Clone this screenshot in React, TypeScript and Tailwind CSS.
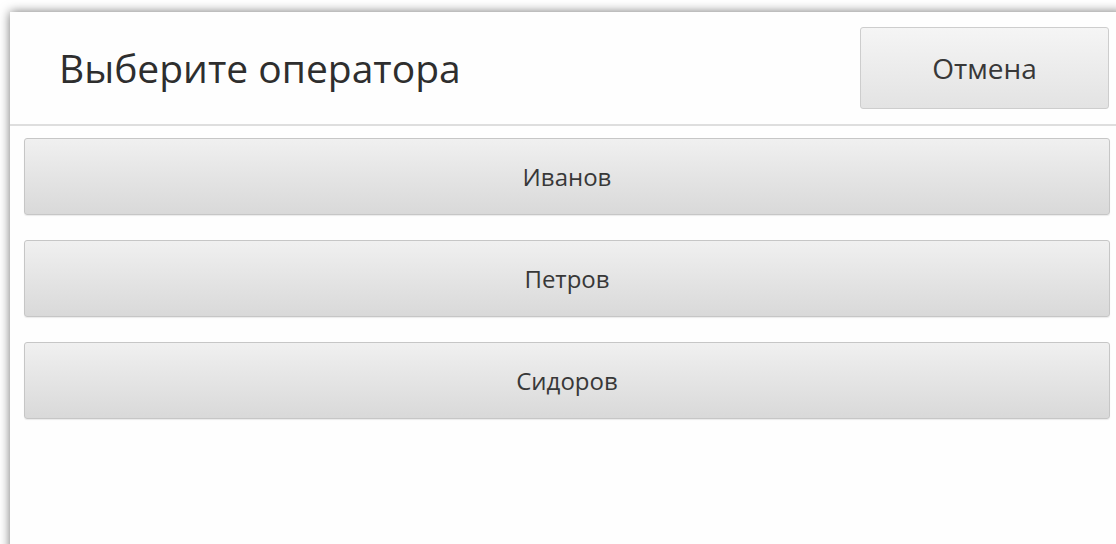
const operators = ['Иванов', 'Петров', 'Сидоров']

function OperatorButton({ name }: { name: string }) {
    return (
        <button
            type="button"
            className="h-[77px] w-full rounded-[3px] border border-[#c6c6c6] bg-gradient-to-b from-[#f0f0f0] to-[#d9d9d9] text-[24px] text-[#383838] shadow-[0_1px_1px_rgba(0,0,0,0.08)]"
        >
            {name}
        </button>
    )
}

export default function App() {
    return (
        <div
            className="h-[544px] w-[1116px] overflow-hidden bg-white pl-[10px] pt-[12px]"
            style={{ fontFamily: '"Open Sans", "Noto Sans", sans-serif' }}
        >
            <div className="h-[600px] w-[1114px] bg-[#fefefe] shadow-[0_0_10px_rgba(0,0,0,0.55)]">
                <div className="flex items-center justify-between border-b-2 border-[#dedede] py-[15px] pl-[49px] pr-[15px]">
                    <h1 className="text-[39px] text-[#2e2e2e]">Выберите оператора</h1>
                    <button
                        type="button"
                        className="h-[82px] w-[249px] rounded-[3px] border border-[#cdcdcd] bg-gradient-to-b from-[#f5f5f5] to-[#e3e3e3] text-[28px] text-[#383838]"
                    >
                        Отмена
                    </button>
                </div>
                <div className="flex flex-col gap-[25px] px-[14px] pt-[12px]">
                    {operators.map((name) => (
                        <OperatorButton key={name} name={name} />
                    ))}
                </div>
            </div>
        </div>
    )
}
